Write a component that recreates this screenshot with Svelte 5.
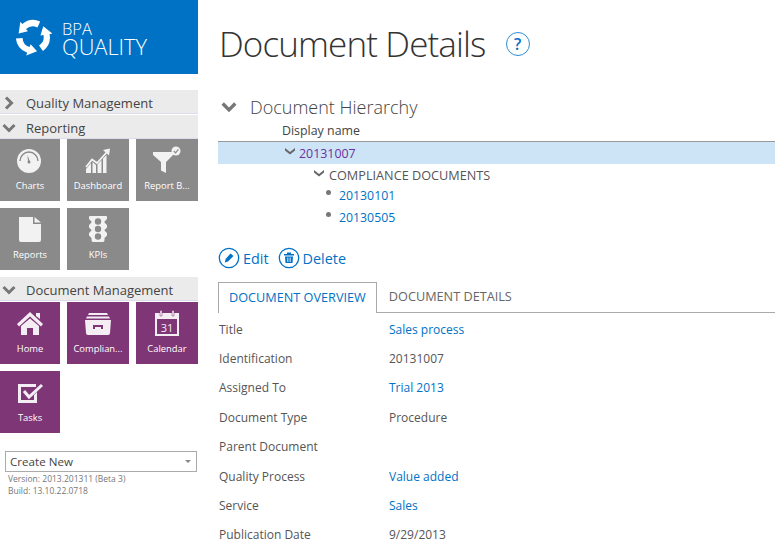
<script>
    const reporting = [
        { label: 'Charts', icon: 'gauge' },
        { label: 'Dashboard', icon: 'chart' },
        { label: 'Report B...', icon: 'funnel' },
        { label: 'Reports', icon: 'doc' },
        { label: 'KPIs', icon: 'light' }
    ];
    const documents = [
        { label: 'Home', icon: 'home' },
        { label: 'Complian...', icon: 'drawer' },
        { label: 'Calendar', icon: 'calendar' },
        { label: 'Tasks', icon: 'tasks' }
    ];
    const fields = [
        { name: 'Title', value: 'Sales process', link: true },
        { name: 'Identification', value: '20131007' },
        { name: 'Assigned To', value: 'Trial 2013', link: true },
        { name: 'Document Type', value: 'Procedure' },
        { name: 'Parent Document', value: '' },
        { name: 'Quality Process', value: 'Value added', link: true },
        { name: 'Service', value: 'Sales', link: true },
        { name: 'Publication Date', value: '9/29/2013' }
    ];
    const arrow = 'M24.8 3.2 A16 16 0 0 0 7.8 5.8 L6 3.6 L4.4 14.6 L13.2 12.6 L11.4 10.4 A9.5 9.5 0 0 1 22.2 9 Z';
</script>

{#snippet chevron(open, size = 14)}
    <svg class="chevron" viewBox="0 0 14 14" width={size} height={size}>
        {#if open}
            <path d="M1.5 4 L7 9.5 L12.5 4" />
        {:else}
            <path d="M4 1.5 L9.5 7 L4 12.5" />
        {/if}
    </svg>
{/snippet}

{#snippet tileIcon(name)}
    <svg viewBox="0 0 32 32" width="32" height="32" class="tile-icon">
        {#if name === 'gauge'}
            <circle cx="15" cy="15" r="12" fill="#f2f2f2" />
            <path d="M6 15a9 9 0 0 1 18 0" fill="none" stroke="#8a8a8a" stroke-width="1.4" />
            <path d="M13.5 9 L15.8 15.5 L14 16 Z" fill="#8a8a8a" />
            <circle cx="15" cy="16" r="1.5" fill="#8a8a8a" />
        {:else if name === 'chart'}
            <path d="M4 27 L4 23 L9 17 L9 27 Z M10.5 27 L10.5 16 L14 19 L14 27 Z M15.5 27 L15.5 18.5 L19.5 14 L19.5 27 Z M21 27 L21 12.5 L24.5 9 L24.5 27 Z" fill="#f2f2f2" />
            <path d="M4 21 L10 13.5 L15 17 L25 6" fill="none" stroke="#f2f2f2" stroke-width="1.8" />
            <path d="M21 4 L28 2.5 L27 9.5 Z" fill="#f2f2f2" />
        {:else if name === 'funnel'}
            <path d="M2 6 L22 6 L22 9 L15 16 L15 27 L10 24.5 L10 16 L2 9 Z" fill="#f2f2f2" />
            <circle cx="25" cy="5" r="4.5" fill="#f2f2f2" />
            <path d="M22.8 5 L24.6 6.8 L27.4 3.4" fill="none" stroke="#8a8a8a" stroke-width="1.2" />
        {:else if name === 'doc'}
            <path d="M5 2 L19 2 L19 9 L27 9 L27 25 Q27 27 25 27 L7 27 Q5 27 5 25 Z M20.5 2 L27 7.5 L20.5 7.5 Z" fill="#f2f2f2" />
        {:else if name === 'light'}
            <path d="M8 1 L24 1 Q25 1 25 2 L25 4 L22.5 6.5 L22.5 7.5 L25 10 L25 12.5 L22.5 15 L22.5 15.5 L25 18 L25 20.5 L22.5 23 L22.5 25 Q22.5 27 21 27 L11 27 Q9.5 27 9.5 25 L9.5 23 L7 20.5 L7 18 L9.5 15.5 L9.5 15 L7 12.5 L7 10 L9.5 7.5 L9.5 6.5 L7 4 L7 2 Q7 1 8 1 Z" fill="#f2f2f2" />
            <circle cx="16" cy="6.5" r="3.2" fill="#8a8a8a" />
            <circle cx="16" cy="14" r="3.2" fill="#8a8a8a" />
            <circle cx="16" cy="21.5" r="3.2" fill="#8a8a8a" />
        {:else if name === 'home'}
            <path d="M16 3 L29 15 L27 17.5 L16 7.5 L5 17.5 L3 15 Z" fill="#f4eef4" />
            <path d="M22 4 L26 4 L26 10 L22 7 Z" fill="#f4eef4" />
            <path d="M7 17 L16 9.5 L25 17 L25 26 L19 26 L19 19 L13 19 L13 26 L7 26 Z" fill="#f4eef4" />
        {:else if name === 'drawer'}
            <path d="M7 4 L25 4 L26 6 L6 6 Z M5 7.5 L27 7.5 L28 9.5 L4 9.5 Z" fill="#f4eef4" />
            <path d="M3 11 L29 11 L28 24 Q28 26 26 26 L6 26 Q4 26 4 24 Z" fill="#f4eef4" />
            <path d="M11 20 L11 16 L21 16 L21 20 L19 20 L19 18 L13 18 L13 20 Z" fill="#7f3676" />
        {:else if name === 'calendar'}
            <path d="M5 5 L27 5 L27 26 L5 26 Z" fill="none" stroke="#f4eef4" stroke-width="2" />
            <path d="M5 5 L27 5 L27 10 L5 10 Z" fill="#f4eef4" />
            <path d="M9 1.5 L11 1.5 L11 7 L9 7 Z M21 1.5 L23 1.5 L23 7 L21 7 Z" fill="#f4eef4" stroke="#7f3676" stroke-width="0.5" />
            <text x="16" y="23" text-anchor="middle" class="cal-text">31</text>
        {:else if name === 'tasks'}
            <path d="M4 6 L22 6 L22 9 L7 9 L7 22 L20 22 L20 17 L23 14 L23 25 L4 25 Z" fill="#f4eef4" />
            <path d="M10 13 L15 19 L28 7" fill="none" stroke="#f4eef4" stroke-width="3" />
        {/if}
    </svg>
{/snippet}

{#snippet tiles(items, kind)}
    <div class="tiles">
        {#each items as item}
            <div class="tile {kind}">
                {@render tileIcon(item.icon)}
                <span class="tile-label">{item.label}</span>
            </div>
        {/each}
    </div>
{/snippet}

<div class="page">
    <aside class="sidebar">
        <div class="logo">
            <svg viewBox="0 0 36 36" width="38" height="38">
                <path d={arrow} fill="#fff" />
                <path d={arrow} fill="#fff" transform="rotate(120 18 18)" />
                <path d={arrow} fill="#fff" transform="rotate(240 18 18)" />
            </svg>
            <div class="logo-text">
                <span class="logo-small">BPA</span>
                <span class="logo-big">QUALITY</span>
            </div>
        </div>

        <div class="section first">{@render chevron(false)}<span>Quality Management</span></div>
        <div class="section">{@render chevron(true)}<span>Reporting</span></div>
        {@render tiles(reporting, 'grey')}
        <div class="section docs">{@render chevron(true)}<span>Document Management</span></div>
        {@render tiles(documents, 'purple')}

        <div class="create">
            <span>Create New</span>
            <i class="caret"></i>
        </div>
        <div class="version">Version: 2013.201311 (Beta 3)<br />Build: 13.10.22.0718</div>
    </aside>

    <main class="content">
        <div class="title-row">
            <h1>Document Details</h1>
            <span class="help">?</span>
        </div>

        <div class="hierarchy-head">
            {@render chevron(true, 16)}
            <h2>Document Hierarchy</h2>
        </div>

        <div class="col-head">Display name</div>
        <div class="tree-selected">
            <svg class="tree-chev" viewBox="0 0 10 8" width="10" height="8"><path d="M0 1 L5 5 L10 1 L10 3.5 L5 7.5 L0 3.5 Z" /></svg>
            <span class="visited">20131007</span>
        </div>
        <div class="tree-group">
            <svg class="tree-chev" viewBox="0 0 10 8" width="10" height="8"><path d="M0 1 L5 5 L10 1 L10 3.5 L5 7.5 L0 3.5 Z" /></svg>
            <span>COMPLIANCE DOCUMENTS</span>
        </div>
        <div class="tree-leaf"><i class="dot"></i><span class="link">20130101</span></div>
        <div class="tree-leaf"><i class="dot"></i><span class="link">20130505</span></div>

        <div class="actions">
            <span class="action">
                <svg viewBox="0 0 22 22" width="22" height="22">
                    <circle cx="11" cy="11" r="9.7" fill="none" stroke="#0072c6" stroke-width="1.3" />
                    <path d="M12.5 6.5 L15.5 9 L10 14.5 L6.8 15.5 L7.6 12 Z" fill="#0072c6" />
                </svg>
                Edit
            </span>
            <span class="action">
                <svg viewBox="0 0 22 22" width="22" height="22">
                    <circle cx="11" cy="11" r="9.7" fill="none" stroke="#0072c6" stroke-width="1.3" />
                    <path d="M6 7 L16 7 L16 8.5 L6 8.5 Z M9 5.5 L13 5.5 L13 7 L9 7 Z M7 9.5 L15 9.5 L14.5 16 L7.5 16 Z" fill="#0072c6" />
                    <path d="M9.5 10.5 L9.5 15 M11 10.5 L11 15 M12.5 10.5 L12.5 15" stroke="#fff" stroke-width="0.6" />
                </svg>
                Delete
            </span>
        </div>

        <div class="tabs">
            <div class="tab active">DOCUMENT OVERVIEW</div>
            <div class="tab">DOCUMENT DETAILS</div>
        </div>

        <dl class="fields">
            {#each fields as f}
                <dt>{f.name}</dt>
                <dd class:link={f.link}>{f.value}</dd>
            {/each}
        </dl>
    </main>
</div>

<style>
    :global(body) {
        margin: 0;
        background: #fff;
        overflow: hidden;
    }

    .page {
        display: flex;
        width: 775px;
        height: 550px;
        overflow: hidden;
        font-family: "Open Sans", "Liberation Sans", sans-serif;
        color: #444;
    }

    .sidebar {
        width: 198px;
        flex: none;
    }

    .logo {
        height: 74px;
        background: #0072c6;
        display: flex;
        align-items: center;
        padding-left: 14px;
        gap: 10px;
        box-sizing: border-box;
        color: #fff;
    }

    .logo-text {
        display: flex;
        flex-direction: column;
        font-weight: 300;
        margin-top: 4px;
    }

    .logo-small {
        font-size: 16.5px;
        line-height: 14px;
    }

    .logo-big {
        font-size: 21.8px;
        line-height: 21px;
    }

    .section {
        height: 24px;
        background: #ebebeb;
        border-bottom: 1px solid #dcdcec;
        display: flex;
        align-items: center;
        padding: 2px 0 0 2px;
        gap: 10px;
        box-sizing: border-box;
        font-size: 13px;
        color: #444;
    }

    .section.first {
        margin-top: 16px;
        margin-bottom: 1px;
    }

    .section.docs {
        margin-top: 7px;
        margin-bottom: 1px;
    }

    .chevron {
        fill: none;
        stroke: #777;
        stroke-width: 3;
        flex: none;
    }

    .tiles {
        display: grid;
        grid-template-columns: 60px 62px 62px;
        grid-auto-rows: 62px;
        gap: 7px;
    }

    .tile {
        display: flex;
        flex-direction: column;
        align-items: center;
        padding-top: 7px;
        box-sizing: border-box;
        color: #fff;
    }

    .tile.grey {
        background: #8a8a8a;
    }

    .tile.purple {
        background: #7f3676;
    }

    .tile-icon {
        flex: none;
    }

    .tile-label {
        font-size: 9.4px;
        margin-top: 2px;
        line-height: 12px;
        white-space: nowrap;
    }

    .cal-text {
        font-family: "Open Sans", sans-serif;
        font-size: 11px;
        fill: #f4eef4;
    }

    .create {
        margin: 18px 0 0 5px;
        width: 192px;
        height: 21px;
        box-sizing: border-box;
        border: 1px solid #ababab;
        display: flex;
        align-items: center;
        justify-content: space-between;
        padding: 0 5px 0 4px;
        font-size: 11.6px;
        color: #444;
    }

    .caret {
        border-left: 3px solid transparent;
        border-right: 3px solid transparent;
        border-top: 3px solid #888;
    }

    .version {
        margin: 1px 0 0 8px;
        font-size: 8.5px;
        line-height: 12px;
        color: #777;
    }

    .content {
        flex: 1;
        min-width: 0;
        padding-left: 21px;
        padding-top: 1px;
    }

    .title-row {
        display: flex;
        align-items: center;
        gap: 20px;
        height: 84px;
        padding-top: 1px;
        box-sizing: border-box;
    }

    h1 {
        margin: 0;
        font-size: 35px;
        font-weight: 300;
        letter-spacing: -0.87px;
        color: #333;
        white-space: nowrap;
    }

    .help {
        width: 24px;
        height: 24px;
        box-sizing: border-box;
        border: 1.4px solid #2a8dd4;
        border-radius: 50%;
        color: #0072c6;
        display: flex;
        align-items: center;
        justify-content: center;
        font-size: 16px;
        font-weight: 600;
    }

    .hierarchy-head {
        display: flex;
        align-items: center;
        gap: 13px;
        height: 26px;
        margin-top: 9px;
        padding-left: 2px;
    }

    h2 {
        margin: 0;
        font-size: 18px;
        font-weight: 300;
        color: #444;
    }

    .col-head {
        margin-left: 63px;
        font-size: 12.4px;
        line-height: 21px;
        color: #444;
    }

    .tree-selected {
        margin-left: -1px;
        height: 23px;
        background: #cde4f7;
        border-top: 1px solid #999;
        display: flex;
        align-items: center;
        padding-left: 67px;
        gap: 4px;
        box-sizing: border-box;
        font-size: 12.4px;
    }

    .tree-chev {
        fill: #666;
        margin-top: -4px;
    }

    .visited {
        color: #6e2f9e;
    }

    .tree-group {
        margin-left: 95px;
        display: flex;
        align-items: center;
        gap: 5px;
        height: 18px;
        margin-top: 2px;
        font-size: 12.7px;
        color: #555;
        white-space: nowrap;
    }

    .tree-leaf {
        margin-left: 107px;
        display: flex;
        align-items: center;
        gap: 8px;
        height: 22px;
        font-size: 12.3px;
    }

    .link {
        color: #0072c6;
    }

    .dot {
        width: 5px;
        height: 5px;
        border-radius: 50%;
        background: #777;
        margin-top: -5px;
    }

    .actions {
        display: flex;
        gap: 9px;
        margin: 18px 0 0 -1px;
        align-items: center;
        height: 24px;
    }

    .action {
        display: flex;
        align-items: center;
        gap: 3px;
        color: #0072c6;
        font-size: 14.4px;
    }

    .tabs {
        display: flex;
        margin: 12px 0 0 -1px;
        height: 31px;
        border-bottom: 1px solid #aaa;
        box-sizing: border-box;
    }

    .tab {
        padding: 0 12px;
        font-size: 12.7px;
        line-height: 28px;
        color: #666;
        white-space: nowrap;
    }

    .tab.active {
        padding: 0 10px;
        color: #0072c6;
        background: #fff;
        border: 1px solid #aaa;
        border-bottom: none;
        height: 31px;
        box-sizing: border-box;
        line-height: 29px;
    }

    .fields {
        margin: 1.5px 0 0;
        display: grid;
        grid-template-columns: 170px 1fr;
        grid-auto-rows: 29.4px;
        align-items: center;
        font-size: 12px;
    }

    dt {
        color: #555;
    }

    dd {
        margin: 0;
        color: #555;
    }

    dd.link {
        color: #0072c6;
    }
</style>
